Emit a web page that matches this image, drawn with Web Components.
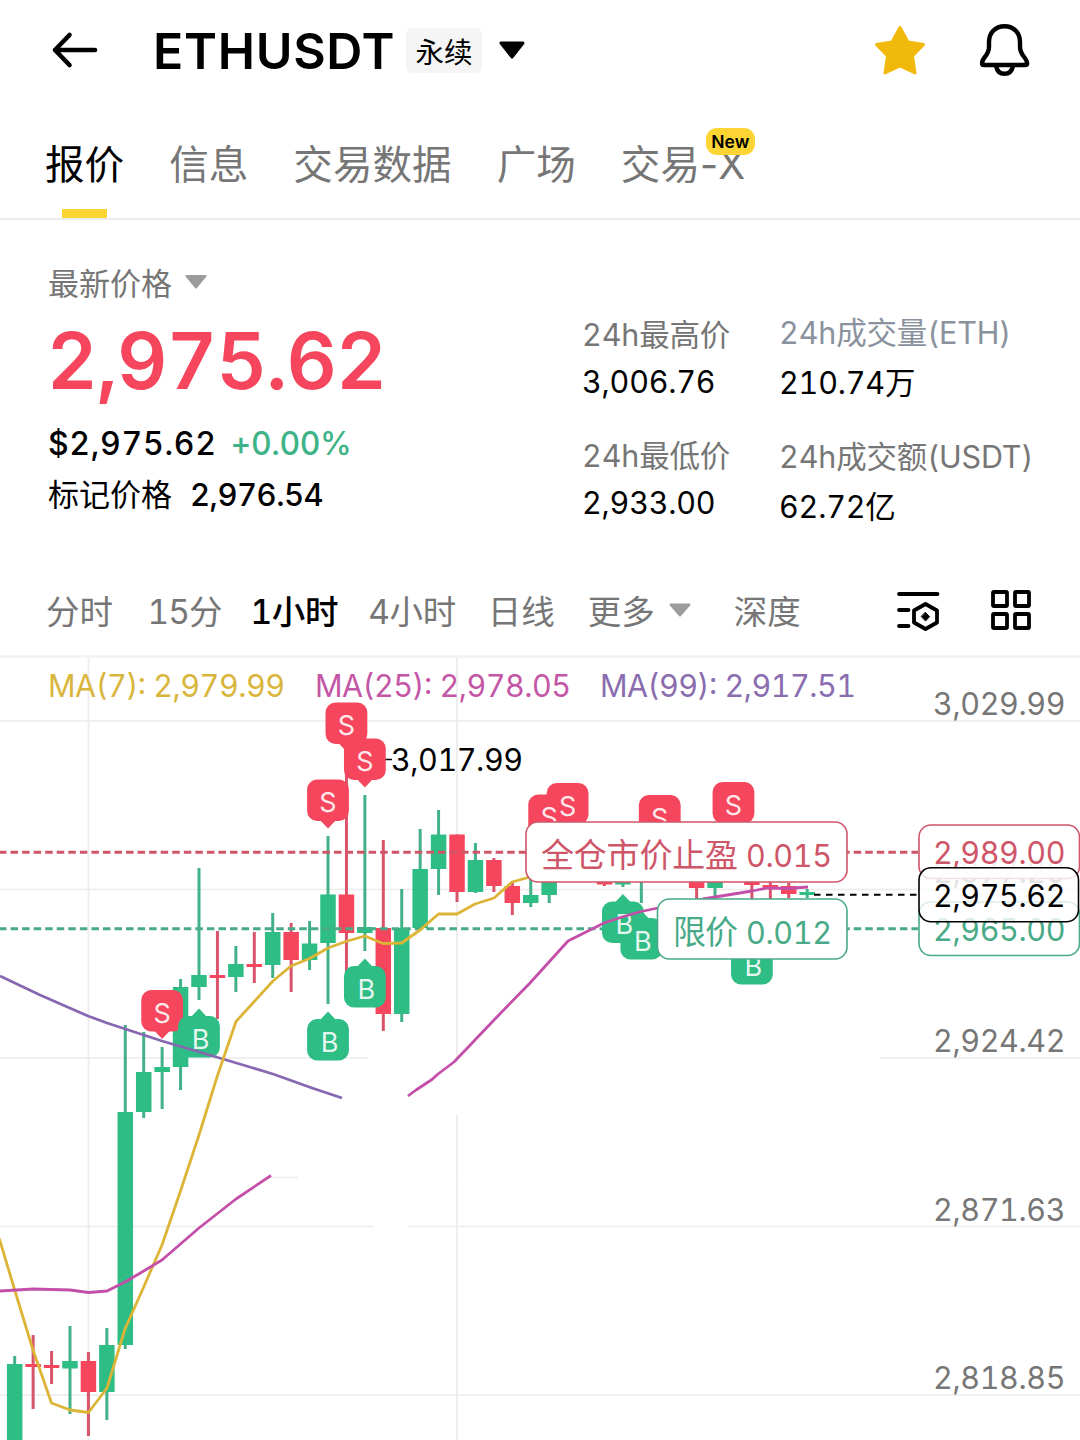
<!DOCTYPE html>
<html lang="zh-CN">
<head>
<meta charset="utf-8">
<title>ETHUSDT</title>
<style>
  body {
    margin: 0;
    width: 1080px;
    height: 1440px;
    overflow: hidden;
    background: #fff;
    color: #000;
    font-family: Inter, "Noto Sans CJK SC", sans-serif;
    font-variant-numeric: tabular-nums;
  }
</style>
</head>
<body>
<market-header symbol="ETHUSDT">永续</market-header>
<tab-bar>
  <tab-item active>报价</tab-item>
  <tab-item>信息</tab-item>
  <tab-item>交易数据</tab-item>
  <tab-item>广场</tab-item>
  <tab-item badge="New">交易-X</tab-item>
</tab-bar>
<price-summary>
  <stat-column>
    <stat-cell label="24h最高价">3,006.76</stat-cell>
    <stat-cell label="24h最低价">2,933.00</stat-cell>
  </stat-column>
  <stat-column class="volume">
    <stat-cell label="24h成交量(ETH)" cool>210.74万</stat-cell>
    <stat-cell label="24h成交额(USDT)">62.72亿</stat-cell>
  </stat-column>
</price-summary>
<interval-bar></interval-bar>
<kline-chart></kline-chart>

<script>
class MarketHeader extends HTMLElement {
  shadowRoot = this.attachShadow({ mode: 'open' });

  connectedCallback() {
    this.shadowRoot.innerHTML = `
      <style>
        :host {
          display: flex;
          align-items: center;
          height: 100px;
          padding: 0 50px 0 51px;
          box-sizing: border-box;
        }
        svg { display: block; }
        h1 {
          margin: 0 0 0 55px;
          width: 254px;
          box-sizing: border-box;
          padding-top: 2px;
          font-size: 50px;
          font-weight: 600;
          line-height: 60px;
          letter-spacing: 0.7px;
          white-space: nowrap;
        }
        .type {
          width: 76px;
          height: 45px;
          margin-left: -1px;
          border-radius: 6px;
          background: #f5f5f5;
          font-size: 28.5px;
          line-height: 50px;
          text-align: center;
        }
        .caret { margin-left: 16px; }
        .star { margin-left: auto; }
        .bell { margin-left: 54px; }
      </style>
      <svg width="47" height="40" viewBox="51 30 47 40" fill="none" stroke="#000" stroke-width="4.6" stroke-linecap="round" stroke-linejoin="round">
        <path d="M95 50H55M69.500 35 55 50 69.500 65"/>
      </svg>
      <h1>${this.getAttribute('symbol')}</h1>
      <span class="type"><slot></slot></span>
      <svg class="caret" width="28" height="18" viewBox="498 41 28 18">
        <path d="M501 43H523L512 57Z" stroke="#000" stroke-width="3" stroke-linejoin="round"/>
      </svg>
      <svg class="star" width="52" height="52" viewBox="874 24 52 52">
        <path d="M900 27.500 908 42 923.500 44.500 912.500 56 915 73 900 66 885 73 887.500 56 876.500 44.500 892 42Z" fill="#f0b90b" stroke="#f0b90b" stroke-width="3" stroke-linejoin="round"/>
      </svg>
      <svg class="bell" width="50" height="54" viewBox="980 23 50 54" fill="none" stroke="#000" stroke-width="4.400" stroke-linejoin="round">
        <path d="M1004.500 26.200C995 26.200 989 33 989 42V47C989 52 987 54.500 984.500 57.500 982.500 60 982 62 982 63.500 982 64.500 982.800 65 984 65H1025C1026.400 65 1027.200 64.500 1027.200 63.500 1027.200 62 1026.500 60 1024.500 57.500 1022 54.500 1020 52 1020 47V42C1020 33 1014 26.200 1004.500 26.200Z"/>
        <path d="M996 66C997 71 1000 73.800 1004.500 73.800 1009 73.800 1012 71 1013 66"/>
      </svg>
    `;
  }
}

class TabBar extends HTMLElement {
  shadowRoot = this.attachShadow({ mode: 'open' });

  connectedCallback() {
    this.shadowRoot.innerHTML = `
      <style>
        :host {
          display: flex;
          gap: 45px;
          height: 120px;
          padding-left: 45px;
          box-sizing: border-box;
          border-bottom: 2px solid #ebebeb;
          font-variant-numeric: normal;
        }
      </style>
      <slot></slot>
    `;
  }
}

class TabItem extends HTMLElement {
  shadowRoot = this.attachShadow({ mode: 'open' });

  connectedCallback() {
    const badge = this.getAttribute('badge');
    this.shadowRoot.innerHTML = `
      <style>
        :host {
          display: flex;
          flex-direction: column;
          align-items: center;
          justify-content: space-between;
          position: relative;
          padding-top: 35px;
          font-size: 39.6px;
          line-height: 60px;
          color: #767676;
          white-space: nowrap;
        }
        :host([active]) { color: #000; }
        .bar { width: 45px; height: 9px; }
        :host([active]) .bar { background: #fcd535; }
        .badge {
          position: absolute;
          left: 85px;
          top: 28px;
          width: 49px;
          height: 27px;
          border-radius: 11px;
          background: #fcd535;
          color: #000;
          font-size: 17.5px;
          font-weight: 600;
          line-height: 28px;
          text-align: center;
        }
      </style>
      <span><slot></slot></span>
      <span class="bar"></span>
      ${badge ? `<span class="badge">${badge}</span>` : ''}
    `;
  }
}

class PriceSummary extends HTMLElement {
  shadowRoot = this.attachShadow({ mode: 'open' });

  connectedCallback() {
    this.shadowRoot.innerHTML = `
      <style>
        :host {
          display: flex;
          height: 347px;
          padding-left: 48px;
          box-sizing: border-box;
        }
        .last { width: 534px; padding-top: 44px; }
        .row { display: flex; align-items: center; height: 40px; line-height: 40px; font-size: 31px; white-space: nowrap; }
        .label { color: #767676; gap: 13px; }
        .label svg { margin-bottom: 5px; }
        .price {
          height: 80px;
          margin-top: 17px;
          margin-left: -1px;
          font-size: 78px;
          font-weight: 600;
          line-height: 80px;
          letter-spacing: -0.7px;
          color: #f6465d;
        }
        .fiat { margin-top: 23px; gap: 14px; font-size: 32px; font-weight: 500; }
        .fiat span { letter-spacing: 0.7px; }
        .fiat .up { color: #3fb388; letter-spacing: -0.4px; }
        .mark { margin-top: 11px; gap: 18px; }
        .mark b { font-weight: 500; letter-spacing: -0.5px; }
        ::slotted(stat-column) { width: 197px; }
        ::slotted(.volume) { --top: 93px; --gap: 10px; width: 290px; }
      </style>
      <div class="last">
        <div class="row label">
          <span>最新价格</span>
          <svg width="22" height="16" viewBox="0 0 22 16"><path d="M1.500 2H20.500L11 13.500Z" fill="#9c9c9c" stroke="#9c9c9c" stroke-width="2" stroke-linejoin="round"/></svg>
        </div>
        <div class="price">2,975.62</div>
        <div class="row fiat"><span>$2,975.62</span><span class="up">+0.00%</span></div>
        <div class="row mark"><span>标记价格</span><b>2,976.54</b></div>
      </div>
      <slot></slot>
    `;
  }
}

class StatColumn extends HTMLElement {
  shadowRoot = this.attachShadow({ mode: 'open' });

  connectedCallback() {
    this.shadowRoot.innerHTML = `
      <style>
        :host {
          display: flex;
          flex-direction: column;
          gap: 34px;
          flex: none;
          padding-top: var(--top, 95px);
        }
      </style>
      <slot></slot>
    `;
  }
}

class StatCell extends HTMLElement {
  shadowRoot = this.attachShadow({ mode: 'open' });

  connectedCallback() {
    this.shadowRoot.innerHTML = `
      <style>
        :host {
          display: flex;
          flex-direction: column;
          gap: var(--gap, 7px);
          font-size: 30.5px;
          line-height: 40px;
          white-space: nowrap;
        }
        .label { color: #767676; letter-spacing: -0.15px; }
        .value { letter-spacing: -0.2px; }
        :host([cool]) .label { color: #8a929d; }
      </style>
      <span class="label">${this.getAttribute('label')}</span>
      <span class="value"><slot></slot></span>
    `;
  }
}

class IntervalBar extends HTMLElement {
  shadowRoot = this.attachShadow({ mode: 'open' });

  connectedCallback() {
    this.shadowRoot.innerHTML = `
      <style>
        :host {
          display: flex;
          align-items: center;
          height: 91px;
          padding: 0 48px 0 46px;
          box-sizing: border-box;
          border-bottom: 3px solid #f4f4f4;
          font-size: 33.5px;
          line-height: 50px;
          color: #767676;
          white-space: nowrap;
        }
        .items { display: flex; align-items: center; gap: 33px; padding-top: 2px; }
        .quarter { letter-spacing: -1px; margin: 0 -4px 0 1.5px; }
        .active { color: #000; font-weight: 500; letter-spacing: -0.3px; margin-right: -3px; }
        .four { letter-spacing: -0.4px; margin-right: -1px; }
        .more { display: flex; align-items: center; gap: 14px; margin-right: 10px; }
        .more svg { margin-bottom: 2px; }
        .tools { display: flex; gap: 50px; margin-left: auto; }
        svg { display: block; }
      </style>
      <div class="items">
        <span>分时</span>
        <span class="quarter">15分</span>
        <span class="active">1小时</span>
        <span class="four">4小时</span>
        <span>日线</span>
        <span class="more">更多
          <svg width="22" height="16" viewBox="0 0 22 16"><path d="M1.500 1.500H20.500L11 12.500Z" fill="#9c9c9c" stroke="#9c9c9c" stroke-width="2" stroke-linejoin="round"/></svg>
        </span>
        <span>深度</span>
      </div>
      <div class="tools">
        <svg width="44" height="42" viewBox="896 590 44 42" fill="none" stroke="#000" stroke-width="3.800" stroke-linejoin="round" stroke-linecap="round">
          <path d="M899 594H937.500M899 610H908.500M899 626H908.500"/>
          <path d="M925.500 604 937 610.500V622.500L925.500 629 914 622.500V610.500Z"/>
          <path d="M925.500 612.500 929.500 616.700 925.500 621 921.500 616.700Z" fill="#000" stroke-width="1"/>
        </svg>
        <svg width="42" height="42" viewBox="990 590 42 42" fill="none" stroke="#000" stroke-width="3.800">
          <rect x="993" y="592" width="14" height="14" rx="1"/>
          <rect x="1015" y="592" width="14" height="14" rx="1"/>
          <rect x="993" y="614" width="14" height="14" rx="1"/>
          <rect x="1015" y="614" width="14" height="14" rx="1"/>
        </svg>
      </div>
    `;
  }
}

// [slot, direction, high, low, body top, body bottom]
const candles = [
  [0, 'up', 1356, 1445, 1364, 1445],
  [1, 'down', 1335, 1409, 1364, 1367],
  [2, 'down', 1351, 1384, 1365, 1368],
  [3, 'up', 1326, 1414, 1361, 1368.5],
  [4, 'down', 1352, 1436, 1361, 1392],
  [5, 'up', 1328, 1420, 1345, 1392],
  [6, 'up', 1025, 1349, 1112, 1345],
  [7, 'up', 1032, 1118, 1072, 1112],
  [8, 'up', 1047, 1109, 1067, 1072],
  [9, 'up', 979, 1090, 987, 1067],
  [10, 'up', 868, 1000, 975, 987],
  [11, 'down', 931, 1019, 975, 978],
  [12, 'up', 946, 992, 964, 977],
  [13, 'down', 932, 983, 964, 967],
  [14, 'up', 913, 978, 932, 965],
  [15, 'down', 923, 992, 932, 960],
  [16, 'up', 921, 970, 943.5, 960],
  [17, 'up', 836, 1004, 894.5, 943],
  [18, 'down', 742, 972, 894.5, 933],
  [19, 'up', 795, 951, 927, 933],
  [20, 'down', 840, 1031, 928, 1014],
  [21, 'up', 889, 1022, 928, 1014],
  [22, 'up', 829, 928, 869, 928],
  [23, 'up', 810, 895, 834.5, 869],
  [24, 'down', 834.5, 902, 834.5, 892],
  [25, 'up', 843, 893, 860, 892],
  [26, 'down', 858, 892, 860, 886],
  [27, 'down', 882, 915, 886, 903],
  [28, 'up', 870, 907, 895, 903],
  [29, 'up', 870, 903, 870, 895],
  [32, 'down', 870, 886, 870, 884.5],
  [33, 'up', 870, 887, 870, 884.5],
  [34, 'up', 870, 903, 870, 880],
  [37, 'down', 870, 902, 870, 888],
  [38, 'up', 870, 902, 870, 888],
  [40, 'down', 870, 902, 870, 885],
  [41, 'down', 880, 902, 885, 889],
  [42, 'down', 883, 898, 886, 894],
  [43, 'up', 889, 898, 892, 895],
];

// [side, slot, box top]
const trades = [
  ['S', 18, 702.5], ['S', 19, 738.5], ['S', 17, 779.5], ['S', 8, 990],
  ['S', 29, 794.5], ['S', 30, 783], ['S', 35, 795], ['S', 39, 782],
  ['B', 10, 1016], ['B', 17, 1019], ['B', 19, 966],
  ['B', 33, 901.5], ['B', 34, 918], ['B', 40, 943],
];

const averages = [
  ['#8768b0', '0,976 40,995 88,1016 107,1023 143.700,1035 162,1041 223,1059 273,1074 312,1088 342,1098'],
  ['#dcb436', '-3,1233 0,1241 14.700,1290 33,1350 51.500,1403 70,1410 88.500,1412.500 107,1388 125,1329 143.700,1287 162,1245 180.500,1191 199,1135 217,1077 236,1021.500 273,981 291,966 309.500,958.500 328,948 346,941.500 364.800,936 383,943.500 401.700,943 420,930 438.500,914 457,914 475,904 494,898 512,882 530,877'],
  ['#c44fa9', '0,1291 33,1289 70,1290 88.500,1292.500 107,1291 125,1282 143.700,1271 162,1260 199,1228 236,1199 271,1175.500'],
  ['#c44fa9', '408,1096 416,1090 432,1079.500 438,1074 454,1062 494,1020 530,983 568,941 604,923 622,917 641,911.500 658,908 703,899 752,891 767,888 788,888.500 808,887'],
];

class KlineChart extends HTMLElement {
  shadowRoot = this.attachShadow({ mode: 'open' });

  connectedCallback() {
    this.shadowRoot.innerHTML = `
      ${this.getStyles()}
      <svg width="1080" height="782" viewBox="0 658 1080 782">
        <path class="grid" d="M88.500 658V1440M457 658V1062M457 1115V1440M0 721H1080M0 889.500H1080M0 1058H368M880 1058H1080M268 1177.500H298M0 1226.500H373M408 1226.500H1080M0 1395H1080"/>
        ${this.label('MA(7): 2,979.99', 48, 697, 237, '#d9b53c')}
        ${this.label('MA(25): 2,978.05', 315, 697, 256, '#c456a6')}
        ${this.label('MA(99): 2,917.51', 600, 697, 256, '#8a6daf')}
        ${candles.map((c) => this.candle(c)).join('')}
        <path class="dash down" d="M-1 852.300H918"/>
        <path class="dash up" d="M-1 928.700H918"/>
        <path class="last" d="M814 894.700H918"/>
        <path d="M385 759.500H392" stroke="#000" stroke-width="1.500"/>
        ${this.label('3,017.99', 391, 771, 132, '#000')}
        ${trades.map((t) => this.tradeBox(t)).join('')}
        ${trades.map((t) => this.tradeSide(t)).join('')}
        ${averages.map(([color, points]) => `<polyline points="${points}" stroke="${color}"/>`).join('')}
        ${this.label('3,029.99', 933, 715, 132.5)}
        ${this.label('2,977.20', 933, 883, 132.5)}
        ${this.label('2,924.42', 933, 1052, 132.5)}
        ${this.label('2,871.63', 933, 1221, 132.5)}
        ${this.label('2,818.85', 933, 1389, 132.5)}
        <rect class="tag" x="526" y="822" width="321" height="60" rx="12" stroke="#cf5568"/>
        ${this.label('全仓市价止盈', 541, 867, 197, '#cf5568', 33)}
        ${this.label('0.015', 746, 867, 86, '#cf5568')}
        <rect class="tag" x="657.500" y="899" width="189.500" height="60" rx="12" stroke="#48aa86"/>
        ${this.label('限价', 673, 944, 65, '#48aa86', 33)}
        ${this.label('0.012', 746, 944, 86, '#48aa86')}
        <rect class="tag" x="919" y="825" width="160.500" height="53.500" rx="12" stroke="#cf5568" fill-opacity=".9"/>
        ${this.label('2,989.00', 933, 864, 132.5, '#cf5568')}
        <rect class="tag" x="919" y="902" width="160.500" height="53.500" rx="12" stroke="#48aa86"/>
        ${this.label('2,965.00', 933, 941, 132.5, '#48aa86')}
        <rect class="tag" x="919" y="867.800" width="159.500" height="54" rx="12" stroke="#000" fill-opacity=".8"/>
        ${this.label('2,975.62', 933, 907, 132.5, '#000')}
      </svg>
    `;
  }

  slotX(index) {
    return 14.7 + index * 18.43;
  }

  label(text, x, y, width, color = '#767676', size = 30.5) {
    return `<text x="${x}" y="${y}" textLength="${width}" fill="${color}" font-size="${size}">${text}</text>`;
  }

  candle([index, direction, high, low, top, bottom]) {
    const x = this.slotX(index);
    return `
      <g class="${direction}">
        <rect class="wick" x="${x - 1.5}" y="${high}" width="3" height="${low - high}"/>
        <rect x="${x - 7.75}" y="${top}" width="15.5" height="${bottom - top}"/>
      </g>
    `;
  }

  tradeBox([side, index, y]) {
    const x = this.slotX(index);
    const tail = side === 'S'
      ? `M${x - 8} ${y + 40.5}L${x} ${y + 49}L${x + 8} ${y + 40.5}Z`
      : `M${x - 8} ${y + 1}L${x} ${y - 7.5}L${x + 8} ${y + 1}Z`;
    return `
      <g class="${side === 'S' ? 'down' : 'up'}">
        <rect x="${x - 20.9}" y="${y}" width="41.800" height="41.500" rx="10"/>
        <path d="${tail}"/>
      </g>
    `;
  }

  // letters go over every box, so a half covered marker stays readable
  tradeSide([side, index, y]) {
    const x = this.slotX(index) + (side === 'B' ? 1.5 : 0);
    return `<text class="side" x="${x}" y="${y + 32.5}">${side}</text>`;
  }

  getStyles() {
    return `
      <style>
        :host { display: block; height: 782px; }
        svg { display: block; }
        .grid { stroke: #ececec; stroke-width: 1.700; fill: none; }
        .up { fill: #2ebd85; }
        .down { fill: #f6465d; }
        .up .wick { fill: #43b187; }
        .down .wick { fill: #d9546a; }
        .dash { stroke-width: 3; stroke-dasharray: 7.500 4.050; }
        .dash.down { stroke: #cf5568; }
        .dash.up { stroke: #48aa86; }
        .last { stroke: #000; stroke-width: 2; stroke-dasharray: 6.500 5.500; }
        .side { fill: #fff; fill-opacity: .9; font-size: 27px; text-anchor: middle; }
        .tag { fill: #fff; stroke-width: 1.600; }
        polyline { fill: none; stroke-width: 2.800; stroke-linejoin: round; }
      </style>
    `;
  }
}

customElements.define('market-header', MarketHeader);
customElements.define('tab-bar', TabBar);
customElements.define('tab-item', TabItem);
customElements.define('price-summary', PriceSummary);
customElements.define('stat-column', StatColumn);
customElements.define('stat-cell', StatCell);
customElements.define('interval-bar', IntervalBar);
customElements.define('kline-chart', KlineChart);
</script>
</body>
</html>
